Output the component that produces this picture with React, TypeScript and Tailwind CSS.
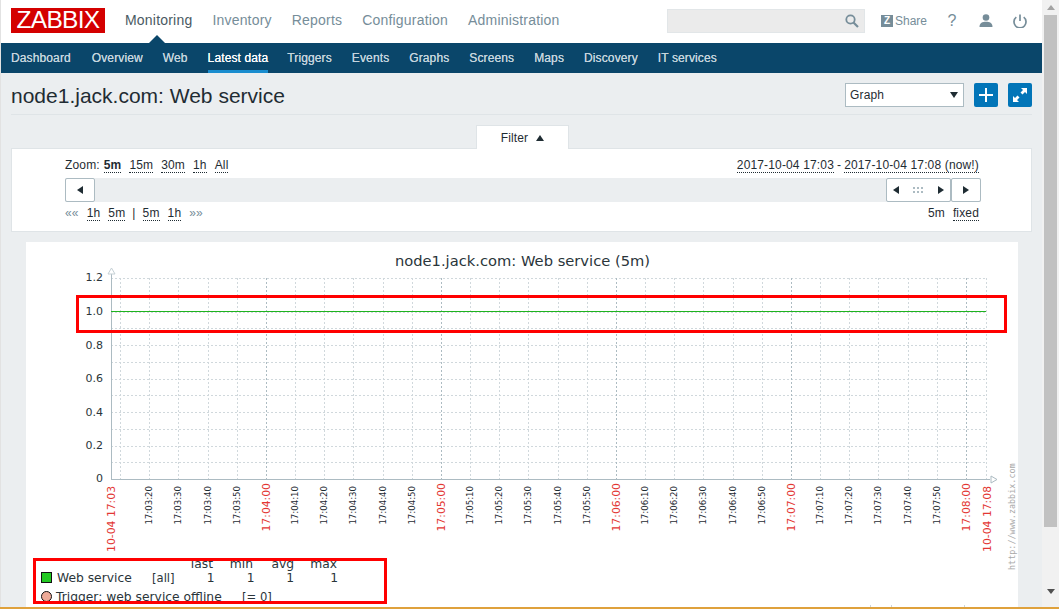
import React from "react";

const topNav = ["Monitoring", "Inventory", "Reports", "Configuration", "Administration"];
const subNav = ["Dashboard", "Overview", "Web", "Latest data", "Triggers", "Events", "Graphs", "Screens", "Maps", "Discovery", "IT services"];

const Dot = ({ children, className = "" }: { children: React.ReactNode; className?: string }) => (
  <span className={"border-b border-dotted border-[#1f2c33] leading-[14px] " + className}>{children}</span>
);

const TriLeft = () => (
  <svg width="8" height="8" viewBox="0 0 8 8"><path d="M1 4 7 0V8Z" fill="#1f2c33" /></svg>
);
const TriRight = () => (
  <svg width="8" height="8" viewBox="0 0 8 8"><path d="M7 4 1 0V8Z" fill="#1f2c33" /></svg>
);

function Graph() {
  const minX = 111;
  const maxX = 986;
  const pxSec = 875 / 300;
  const xs: { x: number; label: string; major: boolean }[] = [];
  for (let m = 3; m <= 8; m++) {
    for (let s = 0; s < 60; s += 10) {
      const sec = (m - 3) * 60 + s - 6.86;
      const x = minX + sec * pxSec;
      if (x <= minX + 1 || x >= maxX - 1) continue;
      xs.push({
        x: Math.round(x),
        label: `17:0${m}:${s === 0 ? "00" : s}`,
        major: s === 0,
      });
    }
  }
  const ys: number[] = [];
  for (let i = 0; i < 12; i++) ys.push(278 + i * 16.75);
  const yLabels: [string, number][] = [
    ["1.2", 277],
    ["1.0", 311],
    ["0.8", 345],
    ["0.6", 378],
    ["0.4", 412],
    ["0.2", 445],
    ["0", 478],
  ];
  const font = { fontFamily: "'DejaVu Sans', sans-serif" };
  const legend = 12.3;
  return (
    <svg width="992" height="365" viewBox="26 242 992 365" style={font} className="block">
      <text x="522.5" y="266" textAnchor="middle" fontSize="14.7" fill="#2a353a">
        node1.jack.com: Web service (5m)
      </text>
      {ys.map((y) => (
        <line key={y} x1={minX} x2={maxX} y1={Math.round(y) + 0.5} y2={Math.round(y) + 0.5} stroke="#d0d8dc" strokeDasharray="2 2" />
      ))}
      {xs.map((t) => (
        <line key={t.x} x1={t.x + 0.5} x2={t.x + 0.5} y1={278} y2={479} stroke={t.major ? "#acbbc2" : "#d0d8dc"} strokeDasharray="2 2" />
      ))}
      <line x1={maxX + 0.5} x2={maxX + 0.5} y1={278} y2={479} stroke="#d0d8dc" strokeDasharray="2 2" />
      <line x1="111.5" x2="111.5" y1="272" y2="480" stroke="#acbbc2" />
      <line x1="111" x2="990" y1="479.5" y2="479.5" stroke="#acbbc2" />
      <path d="M111.5 268 115 274H108Z" fill="#fff" stroke="#c5d0d5" />
      <path d="M991 476 997 479.5 991 483Z" fill="#fff" stroke="#acbbc2" />
      <line x1="111" x2="986" y1="311.5" y2="311.5" stroke="#1fb31f" />
      {yLabels.map(([l, y]) => (
        <text key={l} x="103" y={y + 4} textAnchor="end" fontSize="11" fill="#2a353a">
          {l}
        </text>
      ))}
      {xs
        .filter((t) => t.major || t.x >= 140)
        .map((t) => (
          <text
            key={t.label}
            transform={`translate(${t.x + (t.major ? 4 : 3)},${t.major ? 483 : 486}) rotate(-90)`}
            textAnchor="end"
            fontSize={t.major ? 10.8 : 8.6}
            fill={t.major ? "#e33734" : "#1f2c33"}
          >
            {t.label}
          </text>
        ))}
      <text transform="translate(115,486) rotate(-90)" textAnchor="end" fontSize="10.8" fill="#e33734">
        10-04 17:03
      </text>
      <text transform="translate(991,486) rotate(-90)" textAnchor="end" fontSize="10.8" fill="#e33734">
        10-04 17:08
      </text>
      <text
        transform="translate(1015,570) rotate(-90)"
        fontSize="8.45"
        fill="#a9a9a9"
        style={{ fontFamily: "'DejaVu Sans Mono', monospace" }}
      >
        http://www.zabbix.com
      </text>
      {[
        ["last", 213],
        ["min", 253],
        ["avg", 294],
        ["max", 337],
      ].map(([l, x]) => (
        <text key={l} x={x} y="568" textAnchor="end" fontSize={legend} fill="#2a353a">
          {l}
        </text>
      ))}
      <rect x="41.5" y="572.5" width="10" height="10" fill="#22c922" stroke="#111" />
      <text x="57" y="582" fontSize={legend} fill="#2a353a">Web service</text>
      <text x="152" y="582" fontSize="11.6" fill="#2a353a">[all]</text>
      {[214.5, 254.500, 294, 338].map((x) => (
        <text key={x} x={x} y="582" textAnchor="end" fontSize={legend} fill="#2a353a">1</text>
      ))}
      <circle cx="46.5" cy="596.5" r="5" fill="#eeaa98" stroke="#111" />
      <text x="56" y="601" fontSize={legend} fill="#2a353a">Trigger: web service offline</text>
      <text x="242" y="601" fontSize="11.6" fill="#2a353a">[= 0]</text>
      <line x1="870.5" x2="870.5" y1="605" y2="607" stroke="#ccd5d9" />
      <line x1="891.5" x2="891.5" y1="605" y2="607" stroke="#ccd5d9" />
      <line x1="964.5" x2="964.5" y1="605" y2="607" stroke="#ccd5d9" />
    </svg>
  );
}

export default function App() {
  return (
    <div
      className="relative flex h-[609px] w-[1059px] flex-col overflow-hidden bg-[#ebeef0] text-[12px] text-[#1f2c33]"
      style={{ fontFamily: "'Liberation Sans', Arial, sans-serif" }}
    >
      <div className="flex h-[607px] w-full">
        <div className="w-px bg-[#e2e2e2]" />
        <div className="relative w-[1041px] shrink-0">
          {/* top header */}
          <header className="flex h-[43px] items-center bg-white pl-[10px] pr-[10px]">
            <div className="mb-[2px] flex h-[25px] w-[94px] items-center justify-center bg-[#d40000] text-[24.5px] leading-none tracking-[-0.7px] text-white">
              ZABBIX
            </div>
            <nav className="relative ml-[10px] flex h-full items-center text-[14px] tracking-[0.2px] text-[#768d99]">
              {topNav.map((n, i) => (
                <span key={n} className={"relative px-[10px] pb-[2px] " + (i === 0 ? "text-[#4a5a63]" : "")}>
                  {n}
                  {i === 0 && (
                    <svg width="16" height="8" viewBox="0 0 16 8" className="absolute left-[34px] top-[25px]">
                      <path d="M0 8 8 0 16 8Z" fill="#0a466a" />
                    </svg>
                  )}
                </span>
              ))}
            </nav>
            <div className="ml-auto mb-[2px] flex items-center">
              <div className="flex h-[24px] w-[198px] items-center justify-end border border-[#e2e6e8] bg-[#ebebeb] pr-[5px]">
                <svg width="14" height="14" viewBox="0 0 14 14" fill="none" stroke="#768d99" strokeWidth="1.8">
                  <circle cx="5.5" cy="5.5" r="4.2" />
                  <path d="M8.5 8.5 13 13" strokeWidth="2.2" />
                </svg>
              </div>
              <div className="ml-[16px] flex h-[12px] w-[12px] items-center justify-center bg-[#768d99] text-[10px] font-bold leading-none text-white">
                Z
              </div>
              <span className="ml-[2px] w-[30px] text-[#768d99]">Share</span>
              <span className="ml-[22px] w-[10px] text-center text-[16px] leading-none text-[#768d99]">?</span>
              <svg width="14" height="13" viewBox="0 0 14 13" className="ml-[22px]" fill="#768d99">
                <circle cx="7" cy="3.5" r="3.3" />
                <path d="M0.5 13C0.5 9 3.5 7.8 7 7.8S13.500 9 13.500 13Z" />
              </svg>
              <svg width="14" height="14" viewBox="0 0 14 14" className="ml-[20px] mr-[5px]" fill="none" stroke="#768d99" strokeWidth="1.7">
                <path d="M3.300 3.200A6 6 0 1 0 10.700 3.200" />
                <path d="M7 0.500V7" />
              </svg>
            </div>
          </header>

          {/* sub nav */}
          <nav className="flex h-[30px] bg-[#0a466a] pl-0 tracking-[0.12px] text-[#c5d5de]">
            {subNav.map((n, i) => (
              <span
                key={n}
                className={"flex h-full items-center pl-[10px] " + (i === 0 ? "pr-[11px]" : i === 3 ? "pr-[9px]" : "pr-[10px]")}
              >
                <span
                  className={
                    "flex h-full items-center border-b-[3px] pt-[3px] [text-shadow:0_0_0.6px_currentColor] " +
                    (i === 3 ? "border-[#1a8dcf] text-white" : "border-transparent")
                  }
                >
                  {n}
                </span>
              </span>
            ))}
          </nav>

          {/* title */}
          <div className="mx-[10px] flex h-[42px] items-center justify-between border-b border-[#dfe4e7] pt-[3px]">
            <h1 className="text-[21px] font-normal leading-none text-[#1f2c33]">node1.jack.com: Web service</h1>
            <div className="flex items-center">
              <div className="flex h-[24px] w-[119px] items-center justify-between border border-[#acbbc2] bg-white pl-[4px] pr-[5px] tracking-[0.15px]">
                <span>Graph</span>
                <svg width="8" height="6" viewBox="0 0 8 6"><path d="M0 0H8L4 6Z" fill="#1f2c33" /></svg>
              </div>
              <div className="ml-[10px] flex h-[24px] w-[24px] items-center justify-center rounded-[2px] bg-[#0275b8]">
                <svg width="14" height="14" viewBox="0 0 14 14"><path d="M6 0H8V6H14V8H8V14H6V8H0V6H6Z" fill="#fff" /></svg>
              </div>
              <div className="ml-[10px] flex h-[24px] w-[24px] items-center justify-center rounded-[2px] bg-[#0275b8]">
                <svg width="14" height="14" viewBox="0 0 14 14" fill="#fff">
                  <path d="M8 0H14V6L12 4 9.500 6.500 7.500 4.500 10 2Z" />
                  <path d="M6 14H0V8L2 10 4.500 7.500 6.500 9.500 4 12Z" />
                </svg>
              </div>
            </div>
          </div>

          {/* filter tab */}
          <div className="mt-[10px] flex justify-center pl-[1px]">
            <div className="relative z-10 -mb-px flex h-[24px] w-[93px] items-center justify-center gap-[8px] border-x border-t border-[#dfe4e7] bg-white pl-[1px] tracking-[0.15px]">
              <span>Filter</span>
              <svg width="8" height="6" viewBox="0 0 8 6"><path d="M0 6H8L4 0Z" fill="#1f2c33" /></svg>
            </div>
          </div>

          {/* filter box */}
          <div className="mx-[10px] h-[84px] border border-[#dfe4e7] bg-white pl-[53px] pr-[50px] pt-[9px] leading-[14px] tracking-[0.15px]">
            <div className="flex h-[15px] items-start justify-between pr-[2px]">
              <div className="flex gap-[8px]">
                <span className="-mr-[4px]">Zoom:</span>
                <Dot className="font-bold">5m</Dot>
                <Dot>15m</Dot>
                <Dot>30m</Dot>
                <Dot>1h</Dot>
                <Dot>All</Dot>
              </div>
              <div className="flex">
                <Dot>2017-10-04 17:03</Dot>
                <span className="px-[3px]">-</span>
                <Dot>2017-10-04 17:08 (now!)</Dot>
              </div>
            </div>
            <div className="mt-[5px] flex h-[24px] justify-between bg-[#ebeef0]">
              <div className="flex h-[24px] w-[30px] items-center justify-center rounded-[2px] border border-[#acbbc2] bg-white">
                <TriLeft />
              </div>
              <div className="flex">
                <div className="flex h-[24px] w-[65px] items-center justify-between rounded-[2px] border border-[#acbbc2] bg-white px-[5px]">
                  <TriLeft />
                  <svg width="11" height="6" viewBox="0 0 11 6" fill="#acbbc2">
                    <rect x="0" y="0" width="2" height="2" />
                    <rect x="4" y="0" width="2" height="2" />
                    <rect x="8" y="0" width="2" height="2" />
                    <rect x="0" y="4" width="2" height="2" />
                    <rect x="4" y="4" width="2" height="2" />
                    <rect x="8" y="4" width="2" height="2" />
                  </svg>
                  <TriRight />
                </div>
                <div className="flex h-[24px] w-[30px] items-center justify-center rounded-[2px] border border-[#acbbc2] bg-white">
                  <TriRight />
                </div>
              </div>
            </div>
            <div className="mt-[4px] flex items-start justify-between pr-[2px]">
              <div className="flex gap-[8px]">
                <span className="text-[#768d99]">««</span>
                <Dot>1h</Dot>
                <Dot>5m</Dot>
                <span className="-mx-[1px]">|</span>
                <Dot>5m</Dot>
                <Dot>1h</Dot>
                <span className="text-[#768d99]">»»</span>
              </div>
              <div className="flex gap-[8px]">
                <span>5m</span>
                <Dot>fixed</Dot>
              </div>
            </div>
          </div>

          {/* graph */}
          <div className="ml-[25px] mt-[10px] h-[365px] w-[992px] bg-white">
            <Graph />
          </div>

          {/* red annotations */}
          <div className="absolute left-[75px] top-[295px] h-[38px] w-[931px] border-[3px] border-[#ff0000]" />
          <div className="absolute left-[32px] top-[558px] h-[46px] w-[354px] border-[3px] border-[#ff0000]" />
        </div>

        {/* scrollbar */}
        <div className="relative flex w-[17px] flex-col bg-[#f1f1f1]">
          <div className="flex h-[15px] items-center justify-center pl-[1px]">
            <svg width="8" height="5" viewBox="0 0 8 5"><path d="M0 5H8L4 0Z" fill="#a3a3a3" /></svg>
          </div>
          <div className="ml-[2px] h-[512px] w-[13px] bg-[#c1c1c1]" />
          <div className="mt-auto flex h-[18px] items-start justify-center pl-[1px]">
            <svg width="8" height="5" viewBox="0 0 8 5"><path d="M0 0H8L4 5Z" fill="#505050" /></svg>
          </div>
        </div>
      </div>
      <div className="h-[2px] w-full bg-[#dfa13c]" />
    </div>
  );
}
